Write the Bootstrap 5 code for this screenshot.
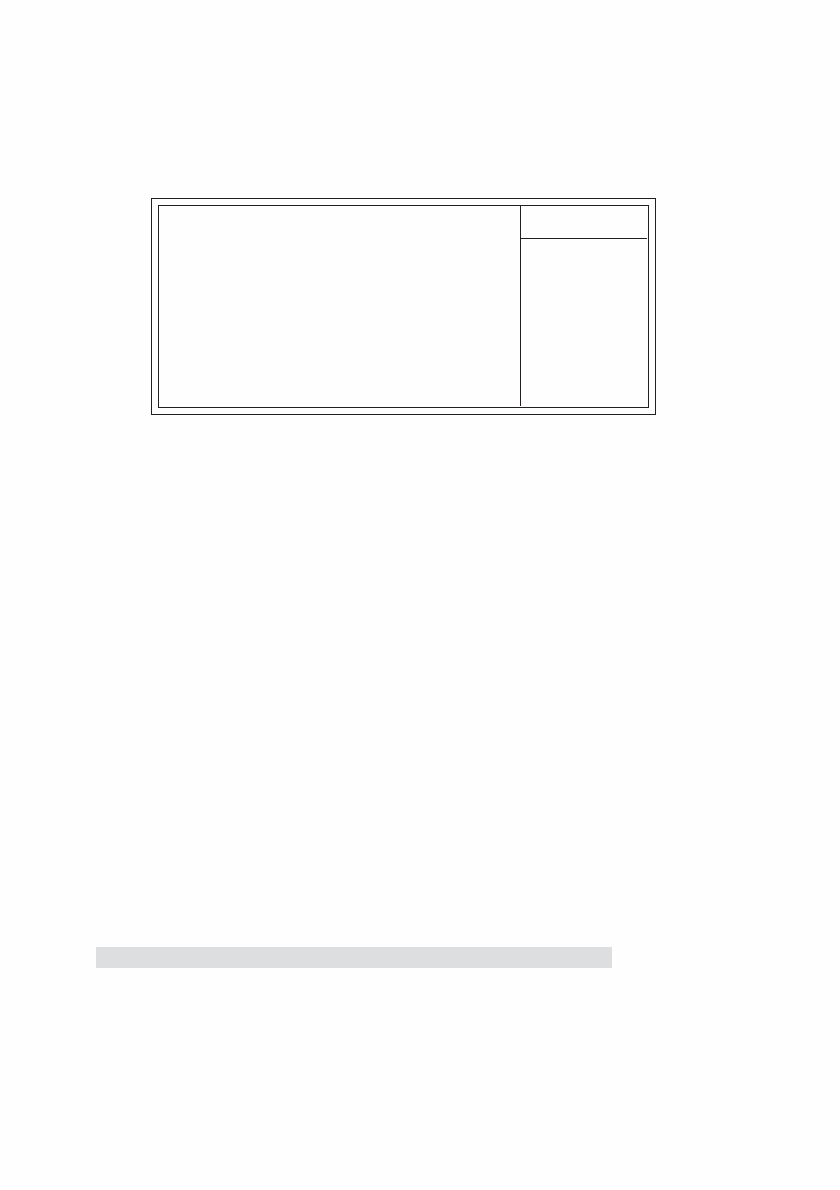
<!DOCTYPE html>
<html lang="en">
<head>
<meta charset="utf-8">
<meta name="viewport" content="width=device-width, initial-scale=1">
<title>Setup panel</title>
<link rel="stylesheet" href="https://cdn.jsdelivr.net/npm/bootstrap@5.3.0/dist/css/bootstrap.min.css">
<style>
  :root { --rule: 1px solid #231f20; }
  body { background: #fefefe; font-family: "Liberation Sans", sans-serif; }
  .sheet { padding: 198px 0 222px; gap: 532px; }
  .setup-frame { margin: 0 184px 0 151px; padding: 6px; border: var(--rule); }
  .setup-inner { min-height: 203px; padding: 0 1px 1px 0; border: var(--rule); }
  .help-pane { flex: 0 0 127px; border-left: var(--rule); }
  .help-head { height: 33px; border-bottom: var(--rule); }
  .note-bar { height: 21px; margin: 0 228px 0 96px; background: #dcdedf; }
</style>
</head>
<body>
<main class="sheet d-flex flex-column">
  <section class="setup-frame" aria-label="Setup screen">
    <div class="setup-inner d-flex">
      <div class="flex-grow-1"></div>
      <aside class="help-pane d-flex flex-column" aria-label="Item help">
        <div class="help-head"></div>
        <div class="flex-grow-1"></div>
      </aside>
    </div>
  </section>
  <div class="note-bar"></div>
</main>
<script src="https://cdn.jsdelivr.net/npm/bootstrap@5.3.0/dist/js/bootstrap.bundle.min.js"></script>
</body>
</html>
